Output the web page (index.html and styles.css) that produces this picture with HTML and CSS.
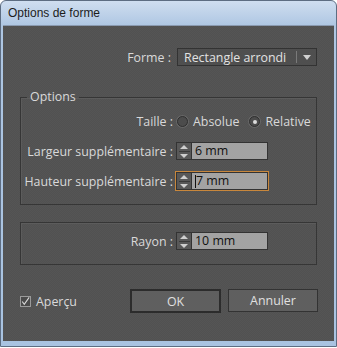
FILE: index.html
```html
<!DOCTYPE html>
<html lang="fr">
<head>
    <meta charset="UTF-8">
    <title>Options de forme</title>
    <link rel="stylesheet" href="styles.css">
</head>
<body>

<div class="window">
    <div class="titlebar">Options de forme</div>

    <div class="panel">
        <div class="shape-row">
            <span class="label">Forme :</span>
            <div class="select">
                <span class="select-text">Rectangle arrondi</span>
                <span class="select-sep"></span>
                <span class="select-arrow"></span>
            </div>
        </div>

        <fieldset class="group group-options">
            <legend>Options</legend>
            <div class="form-grid">
                <span class="label">Taille :</span>
                <div class="radios">
                    <span class="radio"></span><span class="radio-text">Absolue</span>
                    <span class="radio checked"></span><span class="radio-text">Relative</span>
                </div>

                <span class="label">Largeur supplémentaire :</span>
                <div class="field">
                    <span class="spinner"><span class="up"></span><span class="mid"></span><span class="down"></span></span>
                    <span class="value">6 mm</span>
                </div>

                <span class="label">Hauteur supplémentaire :</span>
                <div class="field focused">
                    <span class="spinner"><span class="up"></span><span class="mid"></span><span class="down"></span></span>
                    <span class="value"><span class="caret"></span>7 mm</span>
                </div>
            </div>
        </fieldset>

        <fieldset class="group group-radius">
            <div class="form-grid">
                <span class="label">Rayon :</span>
                <div class="field">
                    <span class="spinner"><span class="up"></span><span class="mid"></span><span class="down"></span></span>
                    <span class="value">10 mm</span>
                </div>
            </div>
        </fieldset>

        <div class="footer">
            <div class="check">
                <span class="checkbox">
                    <svg width="11" height="11" viewBox="0 0 11 11"><path d="M1.5 5.5 L4 9 L10 0.5" fill="none" stroke="#dadada" stroke-width="1.3"/></svg>
                </span>
                <span>Aperçu</span>
            </div>
            <div class="buttons">
                <button class="btn btn-default">OK</button>
                <button class="btn">Annuler</button>
            </div>
        </div>
    </div>
</div>

</body>
</html>
```

FILE: styles.css
```css
* {
    margin: 0;
    padding: 0;
    box-sizing: border-box;
}

body {
    background: #ffffff;
    font-family: 'Open Sans', 'Liberation Sans', sans-serif;
    font-size: 12.4px;
}

.window {
    width: 337px;
    height: 347px;
    border: 1px solid #5d6d82;
    border-radius: 6px 6px 0 0;
    background: linear-gradient(#cfdef0, #aec6e2 25px, #a9c3e1);
    display: flex;
    flex-direction: column;
}

.titlebar {
    height: 24px;
    padding-left: 7px;
    line-height: 24px;
    font-family: 'Liberation Sans', sans-serif;
    font-size: 12px;
    color: #1c1c1c;
}

.panel {
    flex: 1;
    margin: 0 2px 5px 2px;
    border-top: 1px solid #8a9ab0;
    padding: 0 17px;
    background: repeating-conic-gradient(#555555 0 25%, #515151 0 50%) 0 0 / 2px 2px;
    color: #d9d9d9;
}

.label {
    color: #d9d9d9;
    white-space: nowrap;
}

/* Forme dropdown */
.shape-row {
    display: flex;
    justify-content: flex-end;
    align-items: center;
    gap: 6px;
    margin-top: 22px;
}

.select {
    width: 140px;
    height: 18px;
    border: 1px solid #333333;
    background: #4f4f4f;
    display: flex;
    align-items: center;
}

.select-text {
    flex: 1;
    padding-left: 6px;
    color: #e2e2e2;
}

.select-sep {
    width: 1px;
    height: 12px;
    background: #7a7a7a;
    margin-right: 6px;
}

.select-arrow {
    width: 0;
    height: 0;
    border-left: 4px solid transparent;
    border-right: 4px solid transparent;
    border-top: 5px solid #d0d0d0;
    margin-right: 5px;
}

/* Groups */
.group {
    border: 1px solid #363636;
    box-shadow: inset 1px 1px 0 #5c5c5c;
    min-width: 0;
}

.group legend {
    margin-left: 6px;
    padding: 0 3px;
    line-height: 14px;
    color: #d9d9d9;
}

.group-options {
    margin-top: 24px;
    padding: 9px 0 14px 0;
}

.group-radius {
    margin-top: 17px;
    padding: 9px 0 14px 0;
}

.form-grid {
    display: grid;
    grid-template-columns: 152px auto;
    column-gap: 3px;
    row-gap: 12px;
    align-items: center;
}

.form-grid .label {
    text-align: right;
}

/* Radios */
.radios {
    display: flex;
    align-items: center;
    height: 16px;
    padding-left: 1px;
}

.radio {
    width: 11px;
    height: 11px;
    border-radius: 50%;
    border: 1px solid #2f2f2f;
    background: #4c4c4c;
    box-shadow: 0 0 0 1px #666666;
    margin-right: 5px;
    display: flex;
    align-items: center;
    justify-content: center;
}

.radio.checked::after {
    content: "";
    width: 4px;
    height: 4px;
    border-radius: 50%;
    background: #dcdcdc;
}

.radio-text {
    margin-right: 10px;
}

/* Numeric fields */
.field {
    width: 92px;
    height: 18px;
    border: 1px solid #333333;
    display: flex;
}

.field.focused {
    outline: 1px solid #c8873c;
}

.spinner {
    width: 15px;
    background: #585858;
    border-right: 1px solid #333333;
    display: flex;
    flex-direction: column;
    justify-content: center;
    align-items: center;
}

.spinner .up,
.spinner .down {
    width: 0;
    height: 0;
    border-left: 4px solid transparent;
    border-right: 4px solid transparent;
}

.spinner .up {
    border-bottom: 4px solid #cfcfcf;
}

.spinner .down {
    border-top: 4px solid #cfcfcf;
}

.spinner .mid {
    width: 11px;
    height: 1px;
    margin: 2px 0;
    background: #3a3a3a;
}

.value {
    flex: 1;
    background: #a3a3a3;
    color: #111111;
    padding-left: 3px;
    line-height: 16px;
    display: flex;
    align-items: center;
}

.caret {
    width: 1px;
    height: 13px;
    background: #111111;
}

/* Footer */
.footer {
    display: flex;
    align-items: center;
    margin-top: 24px;
    margin-right: -1px;
}

.check {
    display: flex;
    align-items: center;
    gap: 5px;
}

.checkbox {
    width: 11px;
    height: 11px;
    border: 1px solid #9a9a9a;
    background: #4a4a4a;
    display: flex;
    align-items: center;
    justify-content: center;
}

.buttons {
    margin-left: auto;
    display: flex;
    gap: 7px;
}

.btn {
    width: 90px;
    height: 23px;
    border: 1px solid #333333;
    background: #5f5f5f;
    color: #e0e0e0;
    font-family: 'Open Sans', 'Liberation Sans', sans-serif;
    font-size: 12.4px;
}

.btn-default {
    width: 91px;
    height: 24px;
    border: 2px solid #2c2c2c;
}
```
